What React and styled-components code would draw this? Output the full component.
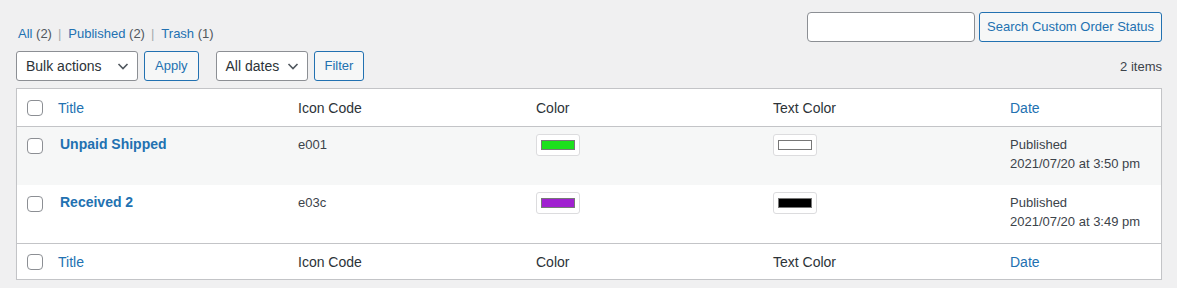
import React from "react";
import styled, { createGlobalStyle } from "styled-components";

const GlobalStyle = createGlobalStyle`
  html, body {
    margin: 0;
    padding: 0;
    background: #f0f0f1;
    font-family: "Liberation Sans", Arial, sans-serif;
    font-size: 13px;
    color: #3c434a;
  }
`;

const Page = styled.div`
  padding: 12px 15px 0 16px;
`;

const TopRow = styled.div`
  display: flex;
  justify-content: space-between;
  align-items: flex-end;
  height: 30px;
`;

const Subsubsub = styled.ul`
  display: flex;
  margin: 0 0 -1px 0;
  padding: 0 0 0 2px;
  list-style: none;
  line-height: 18px;
  color: #646970;
`;

const SubItem = styled.li`
  &:not(:last-child)::after {
    content: "|";
    color: #a7aaad;
    margin: 0 7px 0 6px;
  }
`;

const Link = styled.a`
  color: #2271b1;
  text-decoration: none;
`;

const Count = styled.span`
  color: #50575e;
`;

const SearchBox = styled.div`
  display: flex;
  gap: 4px;
`;

const SearchInput = styled.input`
  box-sizing: border-box;
  width: 168px;
  height: 30px;
  border: 1px solid #8c8f94;
  border-radius: 4px;
  background: #fff;
  margin: 0;
`;

const Button = styled.button`
  box-sizing: border-box;
  height: 30px;
  margin: 0;
  padding: 0 ${(p) => p.$pad || 10}px;
  border: 1px solid #2271b1;
  border-radius: 3px;
  background: #f6f7f7;
  color: #2271b1;
  font-family: inherit;
  font-size: 13px;
  line-height: 28px;
  white-space: nowrap;
`;

const NavRow = styled.div`
  display: flex;
  align-items: center;
  height: 30px;
  margin-top: 9px;
`;

const Actions = styled.div`
  display: flex;
  gap: 6px;
  margin-right: ${(p) => p.$gap || 0}px;
`;

const SelectBox = styled.div`
  box-sizing: border-box;
  width: ${(p) => p.$w}px;
  height: 30px;
  display: flex;
  align-items: center;
  justify-content: space-between;
  padding: 0 6px 0 9px;
  border: 1px solid #8c8f94;
  border-radius: 3px;
  background: #fff;
  color: #2c3338;
  font-size: 14px;
`;

const Items = styled.div`
  margin-left: auto;
  color: #3c434a;
`;

const Table = styled.table`
  box-sizing: border-box;
  width: 100%;
  margin-top: 7px;
  border: 1px solid #c3c4c7;
  border-spacing: 0;
  table-layout: fixed;
  background: #fff;
  box-shadow: 0 1px 1px rgba(0, 0, 0, 0.04);
`;

const Th = styled.th`
  width: ${(p) => (p.$w ? `${p.$w}px` : "auto")};
  height: ${(p) => p.$h}px;
  box-sizing: border-box;
  padding: 0 10px;
  text-align: left;
  font-weight: 400;
  font-size: 14px;
  color: ${(p) => (p.$link ? "#2271b1" : "#2c3338")};
  border-${(p) => (p.$foot ? "top" : "bottom")}: 1px solid #c3c4c7;
  vertical-align: middle;
`;

const Row = styled.tr`
  background: ${(p) => (p.$alt ? "#f6f7f7" : "#fff")};
`;

const Td = styled.td`
  height: ${(p) => p.$h || 58}px;
  box-sizing: border-box;
  padding: 8px 10px;
  vertical-align: top;
  line-height: 19px;
  color: #3c434a;
`;

const Check = styled.span`
  display: inline-block;
  box-sizing: border-box;
  width: 16px;
  height: 16px;
  border: 1px solid #8c8f94;
  border-radius: 4px;
  background: #fff;
  vertical-align: middle;
  margin-top: ${(p) => p.$top || 0}px;
`;

const RowTitle = styled.a`
  display: block;
  padding-left: 2px;
  font-size: 14px;
  font-weight: 700;
  color: #2271b1;
  text-decoration: none;
  line-height: 19px;
`;

const Swatch = styled.div`
  box-sizing: border-box;
  width: 44px;
  height: 22px;
  margin: -1px 0 0 0;
  padding: 5px 4px;
  border: 1px solid #dcdcde;
  border-radius: 3px;
  background: #fff;
`;

const SwatchFill = styled.div`
  box-sizing: border-box;
  width: 34px;
  height: 10px;
  border: 1px solid #777;
  background: ${(p) => p.$c};
`;

const Chevron = () => (
  <svg width="16" height="16" viewBox="0 0 16 16">
    <path d="M3.5 6l4.5 4.5L12.5 6" fill="none" stroke="#50575e" strokeWidth="1.6" />
  </svg>
);

const rows = [
  { title: "Unpaid Shipped", code: "e001", color: "#1ce01c", text: "#ffffff", date: "2021/07/20 at 3:50 pm" },
  { title: "Received 2", code: "e03c", color: "#a020d0", text: "#000000", date: "2021/07/20 at 3:49 pm" },
];

const HeadRow = ({ foot }) => (
  <tr>
    <Th $w={31} $h={foot ? 36 : 38} $foot={foot} style={{ paddingRight: 0 }}>
      <Check />
    </Th>
    <Th $w={240} $h={foot ? 36 : 38} $foot={foot} $link>Title</Th>
    <Th $w={238} $h={foot ? 36 : 38} $foot={foot}>Icon Code</Th>
    <Th $w={237} $h={foot ? 36 : 38} $foot={foot}>Color</Th>
    <Th $w={237} $h={foot ? 36 : 38} $foot={foot}>Text Color</Th>
    <Th $h={foot ? 36 : 38} $foot={foot} $link>Date</Th>
  </tr>
);

export default function App() {
  return (
    <Page>
      <GlobalStyle />
      <TopRow>
        <Subsubsub>
          <SubItem>
            <Link>All <Count>(2)</Count></Link>
          </SubItem>
          <SubItem>
            <Link>Published <Count>(2)</Count></Link>
          </SubItem>
          <SubItem>
            <Link>Trash <Count>(1)</Count></Link>
          </SubItem>
        </Subsubsub>
        <SearchBox>
          <SearchInput type="search" />
          <Button $pad={7}>Search Custom Order Status</Button>
        </SearchBox>
      </TopRow>
      <NavRow>
        <Actions $gap={17}>
          <SelectBox $w={122}>
            Bulk actions <Chevron />
          </SelectBox>
          <Button $pad={10}>Apply</Button>
        </Actions>
        <Actions>
          <SelectBox $w={92}>
            All dates <Chevron />
          </SelectBox>
          <Button $pad={10}>Filter</Button>
        </Actions>
        <Items>2 items</Items>
      </NavRow>
      <Table>
        <thead>
          <HeadRow />
        </thead>
        <tbody>
          {rows.map((r, i) => (
            <Row key={r.title} $alt={i % 2 === 0}>
              <Td style={{ paddingRight: 0 }}>
                <Check $top={1} />
              </Td>
              <Td>
                <RowTitle>{r.title}</RowTitle>
              </Td>
              <Td>{r.code}</Td>
              <Td>
                <Swatch>
                  <SwatchFill $c={r.color} />
                </Swatch>
              </Td>
              <Td>
                <Swatch>
                  <SwatchFill $c={r.text} />
                </Swatch>
              </Td>
              <Td>
                Published
                <br />
                {r.date}
              </Td>
            </Row>
          ))}
        </tbody>
        <tfoot>
          <HeadRow foot />
        </tfoot>
      </Table>
    </Page>
  );
}
